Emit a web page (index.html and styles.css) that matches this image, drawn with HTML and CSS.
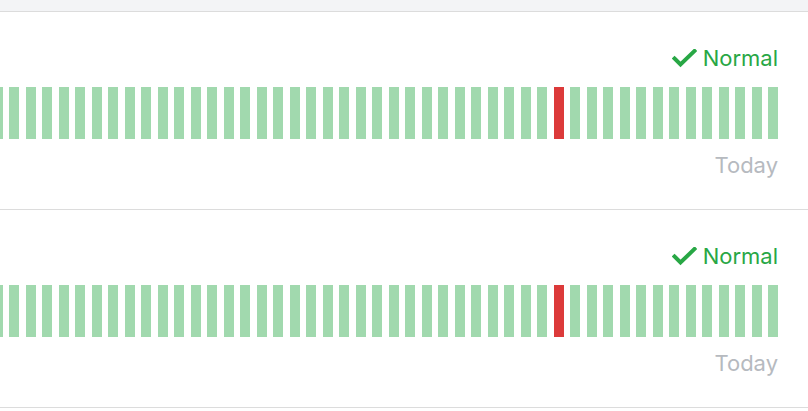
FILE: index.html
```html
<!DOCTYPE html>
<html>
<head>
<meta charset="utf-8">
<link rel="stylesheet" href="styles.css">
</head>
<body>
<div class="topbar"></div>
<div class="card">
  <div class="status"><svg class="check" viewBox="0 0 25 19" width="25" height="19"><polyline points="2.5,9.5 8.5,15.5 22.5,2" fill="none" stroke="#28a745" stroke-width="4" stroke-linecap="square"/></svg><span>Normal</span></div>
  <div class="bars">
    <i></i><i></i><i></i><i></i><i></i><i></i><i></i><i></i><i></i><i></i>
    <i></i><i></i><i></i><i></i><i></i><i></i><i></i><i></i><i></i><i></i>
    <i></i><i></i><i></i><i></i><i></i><i></i><i></i><i></i><i></i><i></i>
    <i></i><i></i><i></i><i></i><i></i><i></i><i></i><i></i><i></i><i></i>
    <i class="down"></i><i></i><i></i><i></i><i></i><i></i><i></i><i></i><i></i><i></i>
    <i></i><i></i><i></i><i></i>
  </div>
  <div class="label">Today</div>
</div>
<div class="card">
  <div class="status"><svg class="check" viewBox="0 0 25 19" width="25" height="19"><polyline points="2.5,9.5 8.5,15.5 22.5,2" fill="none" stroke="#28a745" stroke-width="4" stroke-linecap="square"/></svg><span>Normal</span></div>
  <div class="bars">
    <i></i><i></i><i></i><i></i><i></i><i></i><i></i><i></i><i></i><i></i>
    <i></i><i></i><i></i><i></i><i></i><i></i><i></i><i></i><i></i><i></i>
    <i></i><i></i><i></i><i></i><i></i><i></i><i></i><i></i><i></i><i></i>
    <i></i><i></i><i></i><i></i><i></i><i></i><i></i><i></i><i></i><i></i>
    <i class="down"></i><i></i><i></i><i></i><i></i><i></i><i></i><i></i><i></i><i></i>
    <i></i><i></i><i></i><i></i>
  </div>
  <div class="label">Today</div>
</div>
</body>
</html>
```
FILE: styles.css
```css
html, body {
  margin: 0;
  padding: 0;
  background: #ffffff;
  font-family: "Inter", "Noto Sans", sans-serif;
}
.topbar {
  height: 11px;
  background: #f3f4f6;
  border-bottom: 1px solid #dcdcdc;
}
.card {
  background: #ffffff;
  border-bottom: 1px solid #dcdcdc;
  padding: 34px 30px 32px 0;
  display: flex;
  flex-direction: column;
}
.status {
  display: flex;
  justify-content: flex-end;
  align-items: center;
  gap: 6px;
  height: 24px;
  font-size: 22px;
  line-height: 24px;
  color: #28a745;
}
.check {
  display: block;
}
.bars {
  margin-top: 17px;
  height: 52px;
  display: flex;
  justify-content: flex-end;
  gap: 6.5px;
  overflow: hidden;
}
.bars i {
  flex: 0 0 10px;
  height: 52px;
  background: #a1d9ae;
}
.bars i.down {
  background: #dc3a3a;
}
.label {
  margin-top: 14px;
  height: 24px;
  font-size: 22px;
  line-height: 24px;
  color: #b6babf;
  text-align: right;
}
```
